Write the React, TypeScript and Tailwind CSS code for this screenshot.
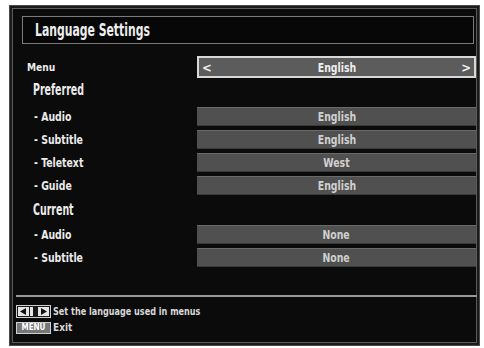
import React from "react";

const font = "font-['DejaVu_Sans_Condensed','DejaVu_Sans',sans-serif]";

function Bar({ text }: { text: string }) {
  return (
    <div className="h-[19px] w-[279px] bg-[#505050] border-t border-[#6a6a6a] border-b border-b-[#3a3a3a] flex items-center justify-center text-[13px] font-bold text-[#d0d0d0] leading-none">
      <span className="block scale-x-[0.8]">{text}</span>
    </div>
  );
}

function Label({ text, cls }: { text: string; cls?: string }) {
  return (
    <span className={`block origin-left text-[#ececec] font-bold leading-none whitespace-nowrap ${cls ?? ""}`}>
      {text}
    </span>
  );
}

export default function App() {
  return (
    <div className={`w-[484px] h-[348px] bg-white overflow-hidden leading-none ${font}`}>
      <div className="ml-[9px] mt-[5px] w-[471px] h-[341px] bg-[#1a1a1a] border border-[#4a4a4a] p-[2px]">
        <div className="w-full h-full bg-[#0b0b0b] border border-[#5c5c5c] flex flex-col">
          {/* title */}
          <div className="ml-[9px] mt-[7px] w-[452px] h-[28px] border border-[#7a7a7a] bg-[#070707] flex items-center pl-[12px]">
            <span className="block origin-left scale-x-[0.67] text-[18px] text-[#eeeeee] font-bold leading-none whitespace-nowrap">
              Language Settings
            </span>
          </div>

          {/* menu row */}
          <div className="mt-[12px] flex items-center h-[22px]">
            <div className="w-[184px] pl-[14px] flex items-center">
              <Label text="Menu" cls="text-[11px] scale-x-[0.92]" />
            </div>
            <div className="w-[279px] h-[22px] bg-[#5c5c5c] border-2 border-[#d8d8d8] flex items-center justify-between px-[3px] text-[#eeeeee] font-bold">
              <span className="text-[13px] leading-none">&lt;</span>
              <span className="block scale-x-[0.8] text-[13px] leading-none">English</span>
              <span className="text-[13px] leading-none">&gt;</span>
            </div>
          </div>

          {/* preferred */}
          <div className="h-[24px] flex items-center pl-[20px]">
            <Label text="Preferred" cls="text-[15px] scale-x-[0.7]" />
          </div>

          <div className="mt-[5px] flex flex-col gap-[4px]">
            {[
              ["- Audio", "English"],
              ["- Subtitle", "English"],
              ["- Teletext", "West"],
              ["- Guide", "English"],
            ].map(([l, v]) => (
              <div key={l} className="flex items-center h-[19px]">
                <div className="w-[184px] pl-[21px] flex items-center">
                  <Label text={l} cls="text-[13px] scale-x-[0.8]" />
                </div>
                <Bar text={v} />
              </div>
            ))}
          </div>

          {/* current */}
          <div className="h-[30px] flex items-center pl-[20px]">
            <Label text="Current" cls="text-[15px] scale-x-[0.7]" />
          </div>

          <div className="flex flex-col gap-[4px]">
            {[
              ["- Audio", "None"],
              ["- Subtitle", "None"],
            ].map(([l, v]) => (
              <div key={l} className="flex items-center h-[19px]">
                <div className="w-[184px] pl-[21px] flex items-center">
                  <Label text={l} cls="text-[13px] scale-x-[0.8]" />
                </div>
                <Bar text={v} />
              </div>
            ))}
          </div>

          {/* divider */}
          <div className="mt-[28px] ml-[3px] w-[461px] h-[2px] bg-[#9a9a9a]" />

          {/* footer */}
          <div className="mt-[8px] ml-[3px] flex flex-col gap-[4px]">
            <div className="flex items-center gap-[2px] h-[13px]">
              <div className="w-[35px] h-[13px] border border-[#cfcfcf] bg-[#1a1a1a] flex items-center px-[1px] gap-[1px]">
                <div className="w-[11px] h-[9px] bg-[#e6e6e6] flex items-center justify-center">
                  <svg width="7" height="7" viewBox="0 0 7 7"><path d="M6 0 L0 3.5 L6 7 Z" fill="#111" /></svg>
                </div>
                <div className="w-[4px] h-[9px] bg-[#e6e6e6]" />
                <div className="w-[3px] h-[9px]" />
                <div className="w-[11px] h-[9px] flex items-center justify-center bg-[#e6e6e6]">
                  <svg width="7" height="7" viewBox="0 0 7 7"><path d="M1 0 L7 3.5 L1 7 Z" fill="#111" /></svg>
                </div>
              </div>
              <span className="block origin-left scale-x-[0.9] text-[10px] text-[#d8d8d8] font-bold leading-none whitespace-nowrap">
                Set the language used in menus
              </span>
            </div>
            <div className="flex items-center gap-[2px] h-[12px]">
              <div className="w-[35px] h-[12px] border border-[#cfcfcf] bg-[#777] flex items-center justify-center">
                <span className="text-[8px] text-white font-bold leading-none">MENU</span>
              </div>
              <span className="text-[10px] text-[#d8d8d8] font-bold leading-none">Exit</span>
            </div>
          </div>
        </div>
      </div>
    </div>
  );
}
